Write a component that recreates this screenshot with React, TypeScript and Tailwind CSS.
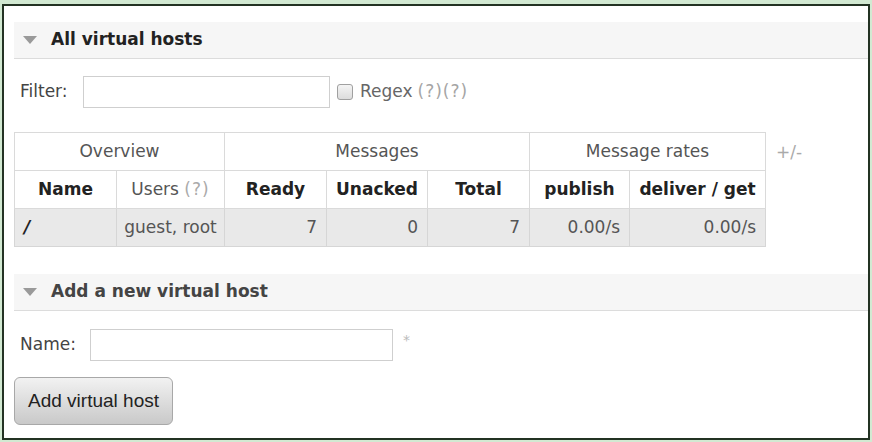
import React from "react";

const font = { fontFamily: '"DejaVu Sans", Verdana, sans-serif' };

function Triangle() {
  return (
    <svg width="14" height="8" viewBox="0 0 14 8" className="shrink-0">
      <polygon points="0,0 14,0 7,8" fill="#9a9a9a" />
    </svg>
  );
}

function SectionHeader({ title, color }: { title: string; color: string }) {
  return (
    <div className="flex h-[37px] items-center gap-[14px] border-b border-[#dcdcdc] bg-[#f6f6f6] pl-[9px]">
      <Triangle />
      <span className={`text-[17px] font-bold ${color}`}>{title}</span>
    </div>
  );
}

export default function App() {
  const th1 = "h-[38px] border border-[#dadada] bg-white text-center font-normal text-[#555]";
  const th2 = "h-[38px] border border-[#dadada] bg-white text-center font-bold text-[#222]";
  const td = "h-[38px] border border-[#d6d6d6] bg-[#e9e9e9] text-[#555] pr-[9px] text-right";
  return (
    <div className="h-[442px] w-[872px] bg-[#d2e9d2] pl-[2px] pt-[4px]" style={font}>
      <div className="h-[436px] w-[868px] border-2 border-[#233223] bg-white pl-[10px] pt-[16px] text-[17px] text-[#444]">
        <SectionHeader title="All virtual hosts" color="text-[#222]" />

        <div className="mt-[17px] flex h-[32px] items-center">
          <span className="ml-[6px] w-[63px]">Filter:</span>
          <div className="h-[32px] w-[247px] border border-[#cfcfcf] bg-white" />
          <div className="ml-[7px] h-[16px] w-[16px] rounded-[3px] border border-[#a0a0a0] bg-gradient-to-b from-[#f4f4f4] to-[#dcdcdc]" />
          <span className="ml-[7px] text-[#666]">Regex</span>
          <span className="ml-[5px] tracking-[1px] text-[#a5a5a5]">(?)(?)</span>
        </div>

        <div className="mt-[24px] flex items-start">
          <table className="table-fixed border-collapse text-[17px]" style={{ width: 751 }}>
            <colgroup>
              <col style={{ width: 102 }} />
              <col style={{ width: 108 }} />
              <col style={{ width: 102 }} />
              <col style={{ width: 101 }} />
              <col style={{ width: 102 }} />
              <col style={{ width: 100 }} />
              <col style={{ width: 136 }} />
            </colgroup>
            <thead>
              <tr>
                <th colSpan={2} className={th1}>Overview</th>
                <th colSpan={3} className={th1}>Messages</th>
                <th colSpan={2} className={th1}>Message rates</th>
              </tr>
              <tr>
                <th className={th2}>Name</th>
                <th className="h-[38px] border border-[#dadada] bg-white text-center font-normal text-[#555]">
                  Users <span className="tracking-[1px] text-[#aaa]">(?)</span>
                </th>
                <th className={th2}>Ready</th>
                <th className={th2}>Unacked</th>
                <th className={th2}>Total</th>
                <th className={th2}>publish</th>
                <th className={th2}>deliver / get</th>
              </tr>
            </thead>
            <tbody>
              <tr>
                <td className="h-[38px] border border-[#d6d6d6] bg-[#e9e9e9] pl-[9px] text-left font-bold italic text-[#222]">/</td>
                <td className="h-[38px] border border-[#d6d6d6] bg-[#e9e9e9] text-center text-[#555]">guest, root</td>
                <td className={td}>7</td>
                <td className={td}>0</td>
                <td className={td}>7</td>
                <td className={td}>0.00/s</td>
                <td className={td}>0.00/s</td>
              </tr>
            </tbody>
          </table>
          <span className="ml-[10px] mt-[8px] text-[#aaa]">+/-</span>
        </div>

        <div className="mt-[27px]">
          <SectionHeader title="Add a new virtual host" color="text-[#444]" />
        </div>

        <div className="mt-[18px] flex h-[32px] items-center">
          <span className="ml-[6px] w-[70px]">Name:</span>
          <div className="h-[32px] w-[303px] border border-[#cfcfcf] bg-white" />
          <span className="mb-[10px] ml-[10px] text-[14px] text-[#bbb]">*</span>
        </div>

        <button
          className="mt-[16px] flex h-[48px] w-[159px] items-center justify-center rounded-[6px] border border-[#a8a8a8] bg-gradient-to-b from-[#f2f2f2] to-[#c9c9c9] text-[19px] text-[#222]"
          style={{ fontFamily: '"Liberation Sans", Arial, sans-serif' }}
        >
          Add virtual host
        </button>
      </div>
    </div>
  );
}
